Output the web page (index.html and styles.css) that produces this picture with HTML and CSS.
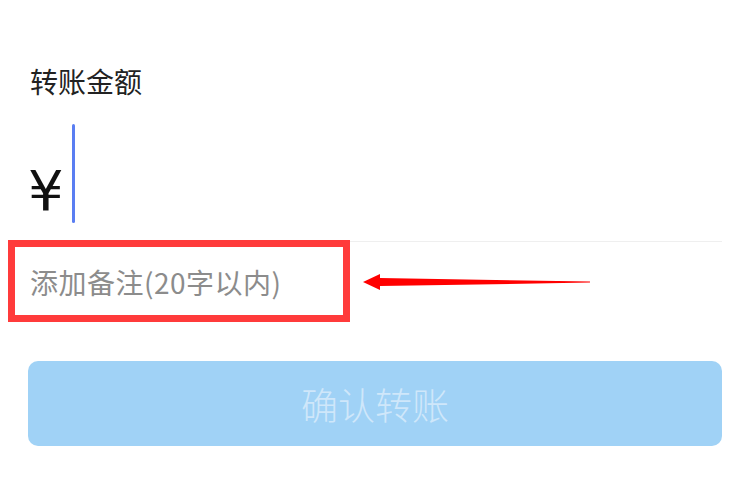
FILE: index.html
```html
<!DOCTYPE html>
<html lang="zh-CN">
<head>
<meta charset="utf-8">
<title>转账</title>
<link rel="stylesheet" href="styles.css">
</head>
<body>
<div class="page">
  <div class="label">转账金额</div>
  <div class="amount-row">
    <span class="yen">¥</span>
    <span class="cursor"></span>
  </div>
  <div class="divider"></div>
  <div class="remark-row">
    <div class="remark">添加备注(20字以内)</div>
    <div class="mark-box"></div>
    <svg class="arrow" width="240" height="20" viewBox="0 0 240 20">
      <polygon points="1,9 18,1 18,5 228,8.6 228,9.6 18,13 18,17" fill="#ff0000"/>
    </svg>
  </div>
  <button class="confirm">确认转账</button>
</div>
</body>
</html>
```

FILE: styles.css
```css
html, body {
  margin: 0;
  padding: 0;
  background: #ffffff;
}
body {
  font-family: "Noto Sans CJK SC", "Noto Sans", sans-serif;
}
.page {
  padding: 62px 25px 0 28px;
}
.label {
  padding-left: 2px;
  font-size: 28px;
  line-height: 38px;
  color: #222222;
}
.amount-row {
  display: flex;
  align-items: flex-end;
  margin-top: 24px;
  padding-left: 0;
  height: 99px;
}
.yen {
  width: 44px;
  font-family: "DejaVu Sans", sans-serif;
  font-size: 56px;
  line-height: 56px;
  color: #111111;
  margin-bottom: 4px;
}
.cursor {
  width: 3px;
  height: 99px;
  background: #5a7ef2;
  border-radius: 2px;
}
.divider {
  margin-top: 18px;
  margin-left: 2px;
  height: 1px;
  background: #efefef;
}
.remark-row {
  position: relative;
  height: 80px;
  padding-left: 2px;
}
.remark {
  font-size: 28px;
  line-height: 80px;
  letter-spacing: 0.5px;
  color: #8c8c8c;
}
.mark-box {
  position: absolute;
  left: -20px;
  top: -2px;
  width: 328px;
  height: 68px;
  border: 7px solid #ff3b3b;
}
.arrow {
  position: absolute;
  left: 334px;
  top: 31px;
}
.confirm {
  display: block;
  width: 100%;
  margin-top: 39px;
  height: 85px;
  border: none;
  border-radius: 10px;
  background: #a0d2f6;
  color: #cfe7fa;
  font-family: "Noto Sans CJK SC", "Noto Sans", sans-serif;
  font-size: 37px;
  font-weight: 300;
}
```
